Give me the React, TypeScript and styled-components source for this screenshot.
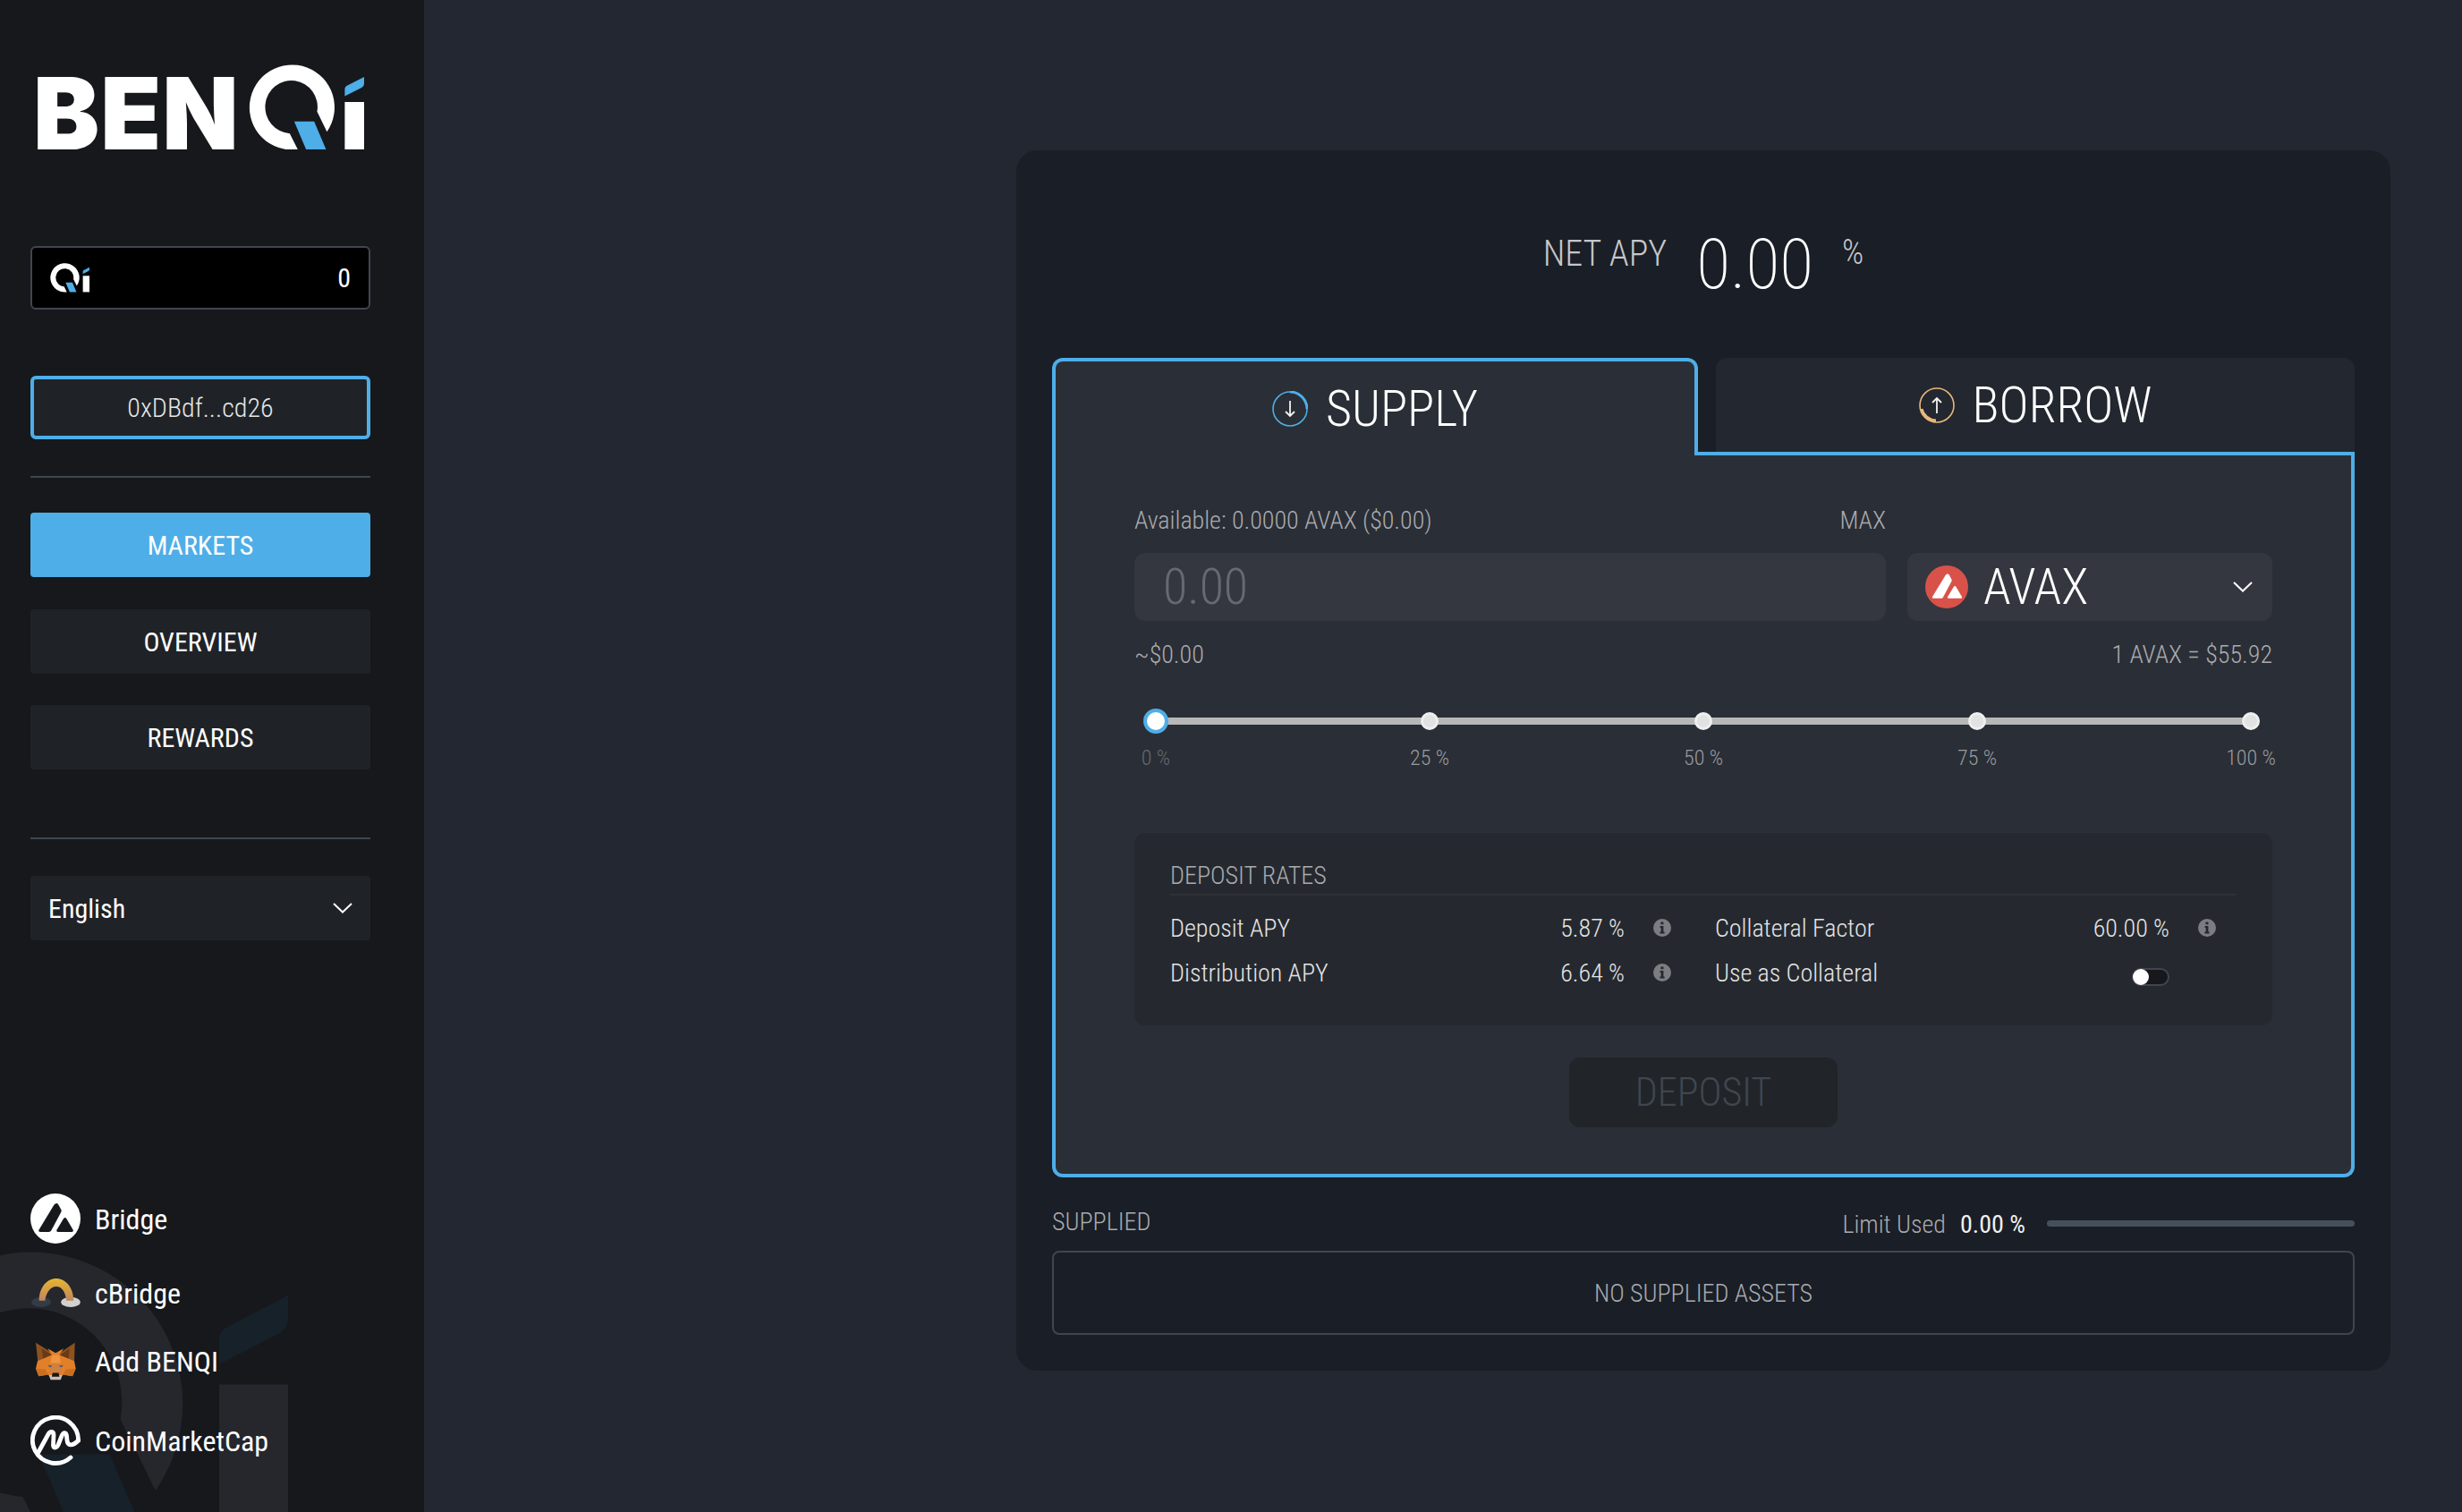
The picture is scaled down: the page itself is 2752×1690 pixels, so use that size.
import React from "react";
import styled, { createGlobalStyle } from "styled-components";

const Global = createGlobalStyle`
  html, body { margin: 0; padding: 0; background: #222731; }
  *, *::before, *::after { box-sizing: border-box; }
  body { font-family: Roboto, "Liberation Sans", sans-serif; font-stretch: 75%; color: #fff; }
`;

const Page = styled.div`
  display: flex;
  height: 1690px;
  overflow: hidden;
`;

const Sidebar = styled.aside`
  position: relative;
  width: 474px;
  flex: none;
  background: #16181c;
  padding: 72px 60px 0 34px;
  display: flex;
  flex-direction: column;
  overflow: hidden;
`;

const Logo = styled.div`
  display: flex;
  align-items: flex-end;
  height: 95px;
  padding-left: 3px;
  gap: 10px;
`;

const LogoText = styled.span`
  font-family: Inter, sans-serif;
  font-stretch: normal;
  font-weight: 900;
  font-size: 111px;
  line-height: 81px;
  letter-spacing: 1px;
  color: #fff;
`;

const BalancePill = styled.div`
  height: 71px;
  margin-top: 108px;
  background: #000;
  border: 2px solid #3f4650;
  border-radius: 6px;
  display: flex;
  align-items: center;
  justify-content: space-between;
  padding: 0 20px;
  font-size: 30px;
`;

const AddressButton = styled.div`
  height: 71px;
  margin-top: 74px;
  background: #1f2328;
  border: 4px solid #4eaee8;
  border-radius: 6px;
  display: flex;
  align-items: center;
  justify-content: center;
  font-size: 30px;
  font-weight: 300;
  color: #e6e6e6;
`;

const Divider = styled.div<{ $top: number }>`
  height: 2px;
  background: #3f4650;
  margin-top: ${(p) => p.$top}px;
`;

const NavButton = styled.div<{ $active?: boolean; $top: number }>`
  height: 72px;
  margin-top: ${(p) => p.$top}px;
  border-radius: 4px;
  background: ${(p) => (p.$active ? "#4eaee8" : "#1f2328")};
  color: #fff;
  display: flex;
  align-items: center;
  justify-content: center;
  font-size: 30px;
`;

const LangSelect = styled.div`
  height: 72px;
  margin-top: 41px;
  border-radius: 4px;
  background: #1f2328;
  display: flex;
  align-items: center;
  justify-content: space-between;
  padding: 0 20px;
  font-size: 30px;
`;

const SideLinks = styled.div`
  position: relative;
  margin-top: 283px;
  display: flex;
  flex-direction: column;
`;

const SideLink = styled.div<{ $top: number }>`
  display: flex;
  align-items: center;
  gap: 16px;
  height: 56px;
  margin-top: ${(p) => p.$top}px;
  font-size: 32px;
  color: #fff;
`;

const SideLinkText = styled.span`
  padding-top: 2px;
`;

const IconSlot = styled.div`
  width: 56px;
  height: 56px;
  flex: none;
  display: flex;
  align-items: center;
  justify-content: center;
`;

const Watermark = styled.div`
  position: absolute;
  left: -138px;
  bottom: -47px;
  width: 460px;
  height: 339px;
`;

const Main = styled.main`
  flex: 1;
  padding: 168px 80px 0 662px;
`;

const Card = styled.section`
  width: 1536px;
  height: 1364px;
  background: #1a1e26;
  border-radius: 24px;
  padding: 0 40px;
  display: flex;
  flex-direction: column;
`;

const NetApy = styled.div`
  height: 232px;
  display: flex;
  align-items: flex-start;
  justify-content: center;
  padding-top: 80px;
`;

const NetLabel = styled.span`
  margin-top: 11px;
  font-size: 40px;
  font-weight: 300;
  line-height: 50px;
  color: #c6c7c9;
`;

const NetValue = styled.span`
  font-size: 78px;
  font-weight: 200;
  line-height: 96px;
  margin: 0 32px 0 33px;
`;

const NetUnit = styled.span`
  margin-top: 11px;
  font-size: 38px;
  font-weight: 300;
  line-height: 46px;
  color: #c6c7c9;
`;

const Tabs = styled.div`
  display: flex;
  height: 109px;
`;

const ActiveTab = styled.div`
  width: 722px;
  flex: none;
  background: #2a2e36;
  border: 4px solid #4eaee8;
  border-bottom: 0;
  border-radius: 12px 12px 0 0;
  display: flex;
  align-items: center;
  justify-content: center;
  gap: 20px;
  font-size: 56px;
  font-weight: 300;
`;

const TabRest = styled.div`
  flex: 1;
  padding-left: 20px;
  border-bottom: 4px solid #4eaee8;
`;

const InactiveTab = styled.div`
  height: 100%;
  background: #23272f;
  border-radius: 12px 12px 0 0;
  display: flex;
  align-items: center;
  justify-content: center;
  gap: 20px;
  font-size: 56px;
  font-weight: 300;
`;

const Panel = styled.div`
  height: 807px;
  background: #2a2e36;
  border: 4px solid #4eaee8;
  border-top: 0;
  border-radius: 0 0 12px 12px;
  padding: 54px 88px 0;
`;

const FieldGrid = styled.div`
  display: grid;
  grid-template-columns: 840px 408px;
  column-gap: 24px;
`;

const TopLine = styled.div`
  display: flex;
  justify-content: space-between;
  align-items: center;
  height: 36px;
  margin-bottom: 19px;
  font-size: 28px;
  font-weight: 300;
  color: #a9abae;
`;

const AmountInput = styled.div`
  height: 76px;
  border-radius: 12px;
  background: #34373f;
  padding: 0 32px;
  display: flex;
  align-items: center;
  font-size: 56px;
  font-weight: 300;
  color: #66696e;
`;

const TokenSelect = styled.div`
  height: 76px;
  border-radius: 12px;
  background: #34373f;
  padding: 0 22px 0 20px;
  display: flex;
  align-items: center;
  font-size: 56px;
  font-weight: 300;
  gap: 17px;
`;

const Chevron = styled.span`
  margin-left: auto;
  display: flex;
`;

const SubLine = styled.div`
  display: flex;
  justify-content: space-between;
  align-items: center;
  height: 36px;
  margin-top: 19px;
  font-size: 28px;
  font-weight: 300;
  color: #a9abae;
`;

const Slider = styled.div`
  position: relative;
  display: flex;
  justify-content: space-between;
  margin-top: 43px;
`;

const Track = styled.div`
  position: absolute;
  left: 24px;
  right: 24px;
  top: 10px;
  height: 8px;
  background: #b8b8b8;
`;

const Stop = styled.div`
  position: relative;
  width: 48px;
  display: flex;
  flex-direction: column;
  align-items: center;
`;

const Dot = styled.div<{ $first?: boolean }>`
  width: 28px;
  height: 28px;
  display: flex;
  align-items: center;
  justify-content: center;
  &::after {
    content: "";
    display: block;
    flex: none;
    width: ${(p) => (p.$first ? 28 : 20)}px;
    height: ${(p) => (p.$first ? 28 : 20)}px;
    border-radius: 50%;
    background: ${(p) => (p.$first ? "#fff" : "#e2e2e2")};
    border: ${(p) => (p.$first ? "4px solid #4eaee8" : "3px solid #efefef")};
  }
`;

const StopLabel = styled.div<{ $first?: boolean }>`
  margin-top: 13px;
  font-size: 24px;
  line-height: 28px;
  font-weight: 300;
  white-space: nowrap;
  color: ${(p) => (p.$first ? "#66696e" : "#9a9c9f")};
`;

const RatesBox = styled.div`
  height: 215px;
  margin-top: 70px;
  background: #25292f;
  border-radius: 12px;
  padding: 31px 40px 0;
`;

const RatesTitle = styled.div`
  font-size: 28px;
  font-weight: 300;
  line-height: 34px;
  padding-bottom: 3px;
  color: #a9abae;
  border-bottom: 2px solid #2e3136;
`;

const RatesGrid = styled.div`
  display: grid;
  grid-template-columns: 562px 562px;
  column-gap: 47px;
  row-gap: 14px;
  margin-top: 18px;
`;

const RateRow = styled.div`
  display: flex;
  align-items: center;
  height: 36px;
  font-size: 28px;
  font-weight: 300;
  color: #e4e4e4;
`;

const RateLabel = styled.span`
  flex: 1;
`;

const InfoSlot = styled.span`
  width: 24px;
  margin-left: 30px;
  display: flex;
  justify-content: center;
`;

const Toggle = styled.span`
  width: 42px;
  height: 20px;
  margin-top: 9px;
  border-radius: 10px;
  background: #16181c;
  border: 2px solid #3f4650;
  display: flex;
  align-items: center;
  &::before {
    content: "";
    width: 18px;
    height: 18px;
    margin-left: -1px;
    border-radius: 50%;
    background: #fff;
  }
`;

const DepositButton = styled.div`
  width: 300px;
  height: 78px;
  margin: 36px auto 0;
  border-radius: 12px;
  background: #212429;
  color: #40464f;
  display: flex;
  align-items: center;
  justify-content: center;
  font-size: 44px;
  font-weight: 300;
`;

const SuppliedHead = styled.div`
  display: flex;
  align-items: center;
  height: 36px;
  margin-top: 33px;
  font-size: 28px;
  font-weight: 300;
  color: #a9abae;
`;

const SuppliedLabel = styled.span`
  margin-bottom: 3px;
`;

const LimitLabel = styled.span`
  margin-left: auto;
  margin-top: 3px;
`;

const LimitValue = styled.span`
  margin: 3px 24px 0 16px;
  font-weight: 400;
  color: #f0f0f0;
`;

const LimitBar = styled.div`
  width: 344px;
  height: 7px;
  border-radius: 4px;
  background: #46505b;
`;

const EmptyBox = styled.div`
  height: 94px;
  margin-top: 13px;
  border: 2px solid #3f4650;
  border-radius: 8px;
  display: flex;
  align-items: center;
  justify-content: center;
  font-size: 28px;
  font-weight: 300;
  color: #a9abae;
`;

function QiMark({ main, accent, width }: { main: string; accent: string; width: string | number }) {
  return (
    <svg viewBox="0 0 388 286" width={width} style={{ display: "block" }}>
      <path
        fill={main}
        d="M263 226A143 143 0 1 0 165 286L138 232A88 89 0 1 1 230 159Z"
      />
      <path fill={accent} d="M153 192H220L260 286H193Z" />
      <path fill={main} d="M323 126H388V286H323Z" />
      <path fill={accent} d="M388 42V64Q388 74 378 79L323 107V84Q323 75 332 71Z" />
    </svg>
  );
}

function AvaxGlyph({ size, bg, fg }: { size: number; bg: string; fg: string }) {
  return (
    <svg viewBox="0 0 48 48" width={size} height={size}>
      <circle cx="24" cy="24" r="24" fill={bg} />
      <path
        fill={fg}
        d="M24.5 9.6c.9-.2 1.5 0 2.2.9l2.6 4.8c.5 1 .5 1.8 0 2.8L20 35.4c-.6 1-1.3 1.4-2.4 1.4H9.5c-1.4 0-2-.8-1.3-2.1L22.6 11c.6-.8 1.1-1.2 1.9-1.4Z"
      />
      <path
        fill={fg}
        d="M31.8 23.9c.7-1.1 2-1.1 2.7 0l6.3 10.8c.7 1.2 0 2.1-1.3 2.1H26.6c-1.4 0-2-.9-1.3-2.1Z"
      />
    </svg>
  );
}

function CBridgeIcon() {
  return (
    <svg viewBox="12 25 166 97" width="55" height="32">
      <defs>
        <linearGradient id="arch" x1="0" y1="0" x2="0" y2="1">
          <stop offset="0" stopColor="#e6b52f" />
          <stop offset="1" stopColor="#c08660" />
        </linearGradient>
      </defs>
      <ellipse cx="45" cy="105" rx="33" ry="17" fill="#333c46" />
      <ellipse cx="145" cy="105" rx="33" ry="17" fill="#d0d0d0" />
      <path
        fill="url(#arch)"
        d="M38 100C38 55 65 25 96 25C127 25 155 55 155 100H130C128 70 115 52 96 52C77 52 62 72 58 100Z"
      />
    </svg>
  );
}

function FoxIcon() {
  return (
    <svg viewBox="28 28 136 130" width="45" height="43">
      <path fill="#8c5220" d="M28 30L88 68L80 95H35Z" />
      <path fill="#8c5220" d="M160 30L105 68L112 95H158Z" />
      <path fill="#6a3a14" d="M48 50L86 74L54 92Z" />
      <path fill="#6a3a14" d="M142 50L108 74L138 92Z" />
      <path
        fill="#e2802a"
        d="M68 50L95 65L122 50L108 72L158 92L163 118L152 144L120 138L110 150H80L70 138L38 144L28 118L34 92L82 72Z"
      />
      <path fill="#f0953c" d="M82 72H108L112 100H78Z" />
      <path fill="#c86f22" d="M28 118L60 120L70 138L38 144Z" />
      <path fill="#c86f22" d="M163 118L130 120L120 138L152 144Z" />
      <path fill="#d08040" d="M78 100H112L118 138H72Z" />
      <path fill="#3a5f78" d="M68 106L84 108L76 114ZM122 106L106 108L114 114Z" />
      <path fill="#c9bdb2" d="M72 140H118L112 156H78Z" />
      <path fill="#1a1512" d="M85 132H105L108 145H82Z" />
    </svg>
  );
}

function CmcIcon() {
  return (
    <svg viewBox="0 0 56 56" width="56" height="56" fill="none" stroke="#fff" strokeWidth="4.8" strokeLinecap="round" strokeLinejoin="round">
      <path d="M45 47A25.6 25.6 0 1 1 53.6 28" />
      <path d="M9 41L20 21C22 17.5 26 17.5 26 22L25.5 33C25.5 37 29 37 31 33L35 23C37 18 40 19 40.5 23L41 28C41.5 34 47 35 53.6 28" />
    </svg>
  );
}

function RingArrow({ color, up }: { color: string; up?: boolean }) {
  return (
    <svg viewBox="0 0 40 40" width="40" height="40" fill="none">
      <circle cx="20" cy="20" r="19" stroke={color} strokeWidth="1.6" />
      <path
        d={up ? "M19 37A17 17 0 0 1 3 24" : "M20 1A19 19 0 0 1 39 20"}
        stroke={color}
        strokeWidth="3"
      />
      <path
        d={up ? "M20 29V12M15 17L20 12L25 17" : "M20 11V28M15 23L20 28L25 23"}
        stroke="#f2f2f2"
        strokeWidth="1.8"
      />
    </svg>
  );
}

function ChevronDown({ width }: { width: number }) {
  return (
    <svg viewBox="0 0 22 12" width={width} height={(width * 12) / 22} fill="none" stroke="#fff" strokeWidth="2">
      <path d="M1 1L11 10.5L21 1" />
    </svg>
  );
}

function InfoDot() {
  return (
    <svg viewBox="0 0 20 20" width="20" height="20">
      <circle cx="10" cy="10" r="10" fill="#7b7d80" />
      <path fill="#25292f" d="M8.4 3.6h3v2.6h-3zM7.6 8h3.8v6.4h1.2v2H7.4v-2h1.2v-4.4h-1z" />
    </svg>
  );
}

const stops = ["0 %", "25 %", "50 %", "75 %", "100 %"];

export default function App() {
  return (
    <Page>
      <Global />
      <Sidebar>
        <Watermark>
          <QiMark main="#25272c" accent="#16212a" width="100%" />
        </Watermark>
        <Logo>
          <LogoText>BEN</LogoText>
          <QiMark main="#ffffff" accent="#4eaee8" width={129} />
        </Logo>
        <BalancePill>
          <QiMark main="#ffffff" accent="#4eaee8" width={44} />
          <span>0</span>
        </BalancePill>
        <AddressButton>0xDBdf...cd26</AddressButton>
        <Divider $top={41} />
        <NavButton $active $top={39}>MARKETS</NavButton>
        <NavButton $top={36}>OVERVIEW</NavButton>
        <NavButton $top={35}>REWARDS</NavButton>
        <Divider $top={76} />
        <LangSelect>
          <span>English</span>
          <ChevronDown width={22} />
        </LangSelect>
        <SideLinks>
          <SideLink $top={0}>
            <IconSlot><AvaxGlyph size={56} bg="#ffffff" fg="#16181c" /></IconSlot>
            <SideLinkText>Bridge</SideLinkText>
          </SideLink>
          <SideLink $top={27}>
            <IconSlot><CBridgeIcon /></IconSlot>
            <SideLinkText>cBridge</SideLinkText>
          </SideLink>
          <SideLink $top={20}>
            <IconSlot><FoxIcon /></IconSlot>
            <SideLinkText>Add BENQI</SideLinkText>
          </SideLink>
          <SideLink $top={33}>
            <IconSlot><CmcIcon /></IconSlot>
            <SideLinkText>CoinMarketCap</SideLinkText>
          </SideLink>
        </SideLinks>
      </Sidebar>
      <Main>
        <Card>
          <NetApy>
            <NetLabel>NET APY</NetLabel>
            <NetValue>0.00</NetValue>
            <NetUnit>%</NetUnit>
          </NetApy>
          <Tabs>
            <ActiveTab>
              <RingArrow color="#4eaee8" />
              <span>SUPPLY</span>
            </ActiveTab>
            <TabRest>
              <InactiveTab>
                <RingArrow color="#e9b87c" up />
                <span>BORROW</span>
              </InactiveTab>
            </TabRest>
          </Tabs>
          <Panel>
            <FieldGrid>
              <TopLine>
                <span>Available: 0.0000 AVAX ($0.00)</span>
                <span>MAX</span>
              </TopLine>
              <div />
              <AmountInput>0.00</AmountInput>
              <TokenSelect>
                <AvaxGlyph size={48} bg="#d8524a" fg="#ffffff" />
                <span>AVAX</span>
                <Chevron><ChevronDown width={22} /></Chevron>
              </TokenSelect>
            </FieldGrid>
            <SubLine>
              <span>~$0.00</span>
              <span>1 AVAX = $55.92</span>
            </SubLine>
            <Slider>
              <Track />
              {stops.map((s, i) => (
                <Stop key={s}>
                  <Dot $first={i === 0} />
                  <StopLabel $first={i === 0}>{s}</StopLabel>
                </Stop>
              ))}
            </Slider>
            <RatesBox>
              <RatesTitle>DEPOSIT RATES</RatesTitle>
              <RatesGrid>
                <RateRow>
                  <RateLabel>Deposit APY</RateLabel>
                  <span>5.87 %</span>
                  <InfoSlot><InfoDot /></InfoSlot>
                </RateRow>
                <RateRow>
                  <RateLabel>Collateral Factor</RateLabel>
                  <span>60.00 %</span>
                  <InfoSlot><InfoDot /></InfoSlot>
                </RateRow>
                <RateRow>
                  <RateLabel>Distribution APY</RateLabel>
                  <span>6.64 %</span>
                  <InfoSlot><InfoDot /></InfoSlot>
                </RateRow>
                <RateRow>
                  <RateLabel>Use as Collateral</RateLabel>
                  <Toggle />
                  <InfoSlot />
                </RateRow>
              </RatesGrid>
            </RatesBox>
            <DepositButton>DEPOSIT</DepositButton>
          </Panel>
          <SuppliedHead>
            <SuppliedLabel>SUPPLIED</SuppliedLabel>
            <LimitLabel>Limit Used</LimitLabel>
            <LimitValue>0.00 %</LimitValue>
            <LimitBar />
          </SuppliedHead>
          <EmptyBox>NO SUPPLIED ASSETS</EmptyBox>
        </Card>
      </Main>
    </Page>
  );
}
